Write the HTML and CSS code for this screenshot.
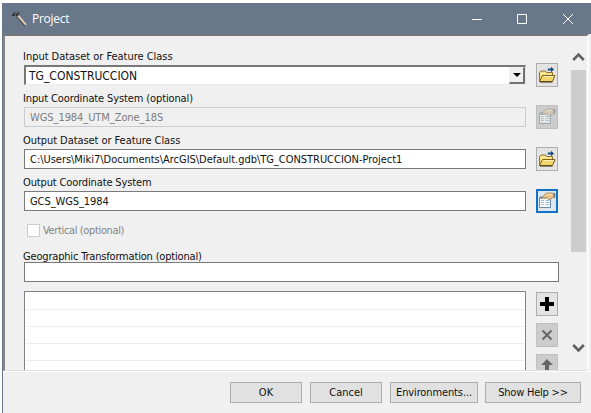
FILE: index.html
```html
<!DOCTYPE html>
<html lang="en">
<head>
<meta charset="utf-8">
<title>Project</title>
<link rel="stylesheet" href="styles.css">
</head>
<body>
<svg class="defs" width="0" height="0">
  <defs>
    <symbol id="folder" viewBox="0 0 18 18">
      <path d="M1.500 15.500V6.500L3 5h4l1.500 1.500H14.500V9" fill="#f8e48d" stroke="#8e702c"/>
      <path d="M1.500 15.500L4.500 9.500H17L14.500 15.500Z" fill="#f3d66b" stroke="#80601c"/>
      <path d="M2 16h12.500" stroke="#3d2e10"/>
      <path d="M5.500 10.500h10" stroke="#fff3b5"/>
      <path d="M10 4.500V2.500h3V.8L16 3.500 13 6.200V4.500Z" fill="#124b82"/>
      <path d="M9 5.500V3" stroke="#9dbdd5"/>
    </symbol>
    <symbol id="props" viewBox="0 0 18 18">
      <path d="M1.500 5.500h11v10h-11z" fill="#f7fbff" stroke="#6c8ba7"/>
      <path d="M2 5.500h6" stroke="#527c9f" stroke-width="2"/>
      <path d="M3 8.500h3m1.500 0h4M3 10.500h3m1.500 0h4M3 12.500h3m1.500 0h4" stroke="#9ebcd5"/>
      <path d="M4 6L6.500 2.500 9 1h5l3 .5v4l-3 .5-2.500 1.500-2-.5-1-1.500-3 1Z" fill="#e8c28b" stroke="#a47a48" stroke-width=".7"/>
      <path d="M7.500 3.500L10 2.500h4" stroke="#ffe5bb" fill="none"/>
      <path d="M15.500 1.200h1.500v4h-1.500z" fill="#5e7582"/>
    </symbol>
  </defs>
</svg>
<div class="window">
  <header class="titlebar">
    <svg class="hammer" width="18" height="18" viewBox="0 0 18 18">
      <path d="M6 5.500L14.500 15.500" stroke="#4e4a49" stroke-width="3"/>
      <path d="M6.500 5L15 14.800" stroke="#ddcbb8" stroke-width="2"/>
      <path d="M.8 5.500L3 2.500 8 1.800 8.500 3.500 6.500 6.500 4.500 4.800 2 6.500Z" fill="#252c30"/>
      <path d="M3.500 3.500l4-.7" stroke="#a8b0b4" stroke-width=".8"/>
    </svg>
    <h1 class="title"><span>Project</span></h1>
    <svg class="controls" width="104" height="12" viewBox="0 0 104 12" fill="none" stroke="#fff">
      <path d="M1 6.500h10M46.500 1.500h9v9h-9zM92 1l10 10M102 1L92 11"/>
    </svg>
  </header>
  <main class="pane">
    <form class="form">
      <div class="row">
        <label class="label"><span class="l1">Input Dataset or Feature Class</span></label>
        <div class="field combo"><span class="v1">TG_CONSTRUCCION</span><b class="drop"></b></div>
        <div class="tool"><svg width="18" height="18"><use href="#folder"/></svg></div>
      </div>
      <div class="row">
        <label class="label"><span class="l2">Input Coordinate System (optional)</span></label>
        <div class="field disabled"><span class="v2">WGS_1984_UTM_Zone_18S</span></div>
        <div class="tool off"><svg class="faded" width="18" height="18"><use href="#props"/></svg></div>
      </div>
      <div class="row">
        <label class="label"><span class="l3">Output Dataset or Feature Class</span></label>
        <div class="field"><span class="v3">C:\Users\Miki7\Documents\ArcGIS\Default.gdb\TG_CONSTRUCCION-Project1</span></div>
        <div class="tool"><svg width="18" height="18"><use href="#folder"/></svg></div>
      </div>
      <div class="row">
        <label class="label"><span class="l4">Output Coordinate System</span></label>
        <div class="field"><span class="v4">GCS_WGS_1984</span></div>
        <div class="tool focus"><svg width="18" height="18"><use href="#props"/></svg></div>
      </div>
      <div class="check"><i class="box"></i><span class="l5">Vertical (optional)</span></div>
      <label class="label"><span class="l6">Geographic Transformation (optional)</span></label>
      <div class="field wide"></div>
      <div class="listrow">
        <div class="list"><i></i><i></i><i></i><i></i><i></i></div>
        <div class="tools">
          <div class="tool"><svg width="14" height="14"><path d="M7 0v14M0 7h14" stroke="#000" stroke-width="4"/></svg></div>
          <div class="tool off"><svg width="14" height="14"><path d="M2.500 2.500l9 9M11.500 2.500l-9 9" stroke="#666" stroke-width="2"/></svg></div>
          <div class="tool off"><svg width="14" height="16"><path d="M7 1l6 6H9v8H5V7H1z" fill="#666"/></svg></div>
        </div>
      </div>
    </form>
    <div class="scroll">
      <svg width="13" height="10" viewBox="0 0 13 10"><path d="M1.200 8l5.300-5.500L11.800 8" fill="none" stroke="#606060" stroke-width="2.600"/></svg>
      <div class="track"><div class="thumb"></div></div>
      <svg width="13" height="10" viewBox="0 0 13 10"><path d="M1.200 2l5.300 5.500L11.800 2" fill="none" stroke="#606060" stroke-width="2.600"/></svg>
    </div>
  </main>
  <footer class="footer">
    <div class="btn ok"><span>OK</span></div>
    <div class="btn cancel"><span>Cancel</span></div>
    <div class="btn env"><span>Environments...</span></div>
    <div class="btn help"><span>Show Help &gt;&gt;</span></div>
  </footer>
</div>
</body>
</html>
```

FILE: styles.css
```css
* { box-sizing: border-box; }
body {
  margin: 0;
  width: 591px;
  height: 413px;
  overflow: hidden;
  background: #fff;
  padding: 3px 0 0 2px;
  font: 11px/14px "DejaVu Sans Condensed", "DejaVu Sans", sans-serif;
  color: #111;
}
.defs { display: block; position: absolute; }
svg { display: block; flex: none; }
span { white-space: nowrap; }
.window {
  height: 410px;
  display: flex;
  flex-direction: column;
  background: #f0f0f0;
  border-left: 1px solid #6a7a8e;
}
.titlebar {
  height: 31px;
  flex: none;
  display: flex;
  align-items: center;
  background: #687789;
  margin-left: -1px;
  padding: 0 16px 0 9px;
}
.title {
  margin: 0 auto 0 3px;
  font: 12px/16px "Open Sans", "Noto Sans", sans-serif;
  letter-spacing: -.25px;
  color: #fff;
}
.pane {
  height: 337px;
  flex: none;
  display: flex;
  overflow: hidden;
  margin-right: 2px;
  border: solid;
  border-width: 2px 2px 1px;
  border-color: #777 #fbfbfb #e0e0e0 #85858b;
}
.form { width: 554px; flex: none; padding: 13px 0 0 19px; }
.row {
  display: grid;
  grid-template: 14px 24px / 502px 22px;
  column-gap: 10px;
  align-items: center;
  margin-bottom: 4px;
}
.label { grid-column: 1 / -1; display: block; height: 14px; margin-left: -1px; line-height: 16px; }
.field {
  height: 20px;
  display: flex;
  align-items: center;
  padding: 1px 0 0 5px;
  background: #fff;
  border: 1px solid #7a7a7a;
}
.disabled { border-color: #ccc; background: #f0f0f0; color: #7d7d7d; }
.combo {
  border-width: 2px 1px 1px 2px;
  border-color: #777 #e6e6e6 #eee #777;
  padding: 0 0 0 3px;
}
.l1 { letter-spacing: -.03px; }
.l2 { letter-spacing: -.12px; }
.l3 { letter-spacing: -.06px; }
.l4 { letter-spacing: -.14px; }
.l5 { letter-spacing: -.36px; line-height: 16px; }
.l6 { letter-spacing: -.18px; }
.v1 { font-size: 12px; }
.v2 { letter-spacing: -.07px; }
.v3 { letter-spacing: -.03px; }
.v4 { letter-spacing: -.08px; }
.drop {
  margin-left: auto;
  width: 16px;
  height: 17px;
  display: flex;
  align-items: center;
  justify-content: center;
  background: #f0f0f0;
  border: solid;
  border-width: 1px 2px 2px 1px;
  border-color: #f0f0f0 #707070 #707070 #f0f0f0;
}
.drop::before { content: ""; border: 4px solid transparent; border-top-color: #000; border-bottom: 0; }
.tool {
  width: 22px;
  height: 24px;
  flex: none;
  display: flex;
  align-items: center;
  justify-content: center;
  border: 1px solid #adadad;
  background: #e3e3e3;
}
.off { background: #ccc; border-color: #bfbfbf; }
.faded { opacity: .55; filter: saturate(.6); }
.focus { border: 2px solid #1272c6; background: #dde7ef; }
.check { display: flex; align-items: center; gap: 3px; height: 14px; margin: 10px 0 12px 3px; color: #858585; }
.l5 { padding-top: 1px; }
.box { width: 13px; height: 13px; background: #fff; border: 1px solid #ccc; }
.wide { width: 535px; margin-top: -1px; }
.listrow { display: flex; gap: 10px; margin-top: 9px; }
.list { width: 502px; height: 90px; background: #fff; border: solid #808488; border-width: 1px 1px 0; padding: 1px 1px 0; }
.list i { display: block; height: 17px; border-bottom: 1px solid #ededed; }
.tools { display: flex; flex-direction: column; gap: 7px; padding-top: 1px; }
.scroll {
  width: 15px;
  height: 334px;
  margin-left: 12px;
  flex: none;
  display: flex;
  flex-direction: column;
  align-items: center;
  padding: 16px 0 17px;
}
.track { flex: 1; width: 15px; padding-top: 8px; }
.thumb { height: 182px; background: #cdcdcd; }
.footer { display: flex; padding: 10px 0 0 227px; border-top: 1px solid #fff; }
.btn {
  height: 21px;
  display: flex;
  align-items: center;
  justify-content: center;
  border: 1px solid #adadad;
  background: #e1e1e1;
  margin-right: 8px;
}
.ok, .cancel { width: 72px; }
.env { width: 88px; margin-right: 7px; letter-spacing: -.12px; }
.help { width: 96px; letter-spacing: -.22px; }
```
